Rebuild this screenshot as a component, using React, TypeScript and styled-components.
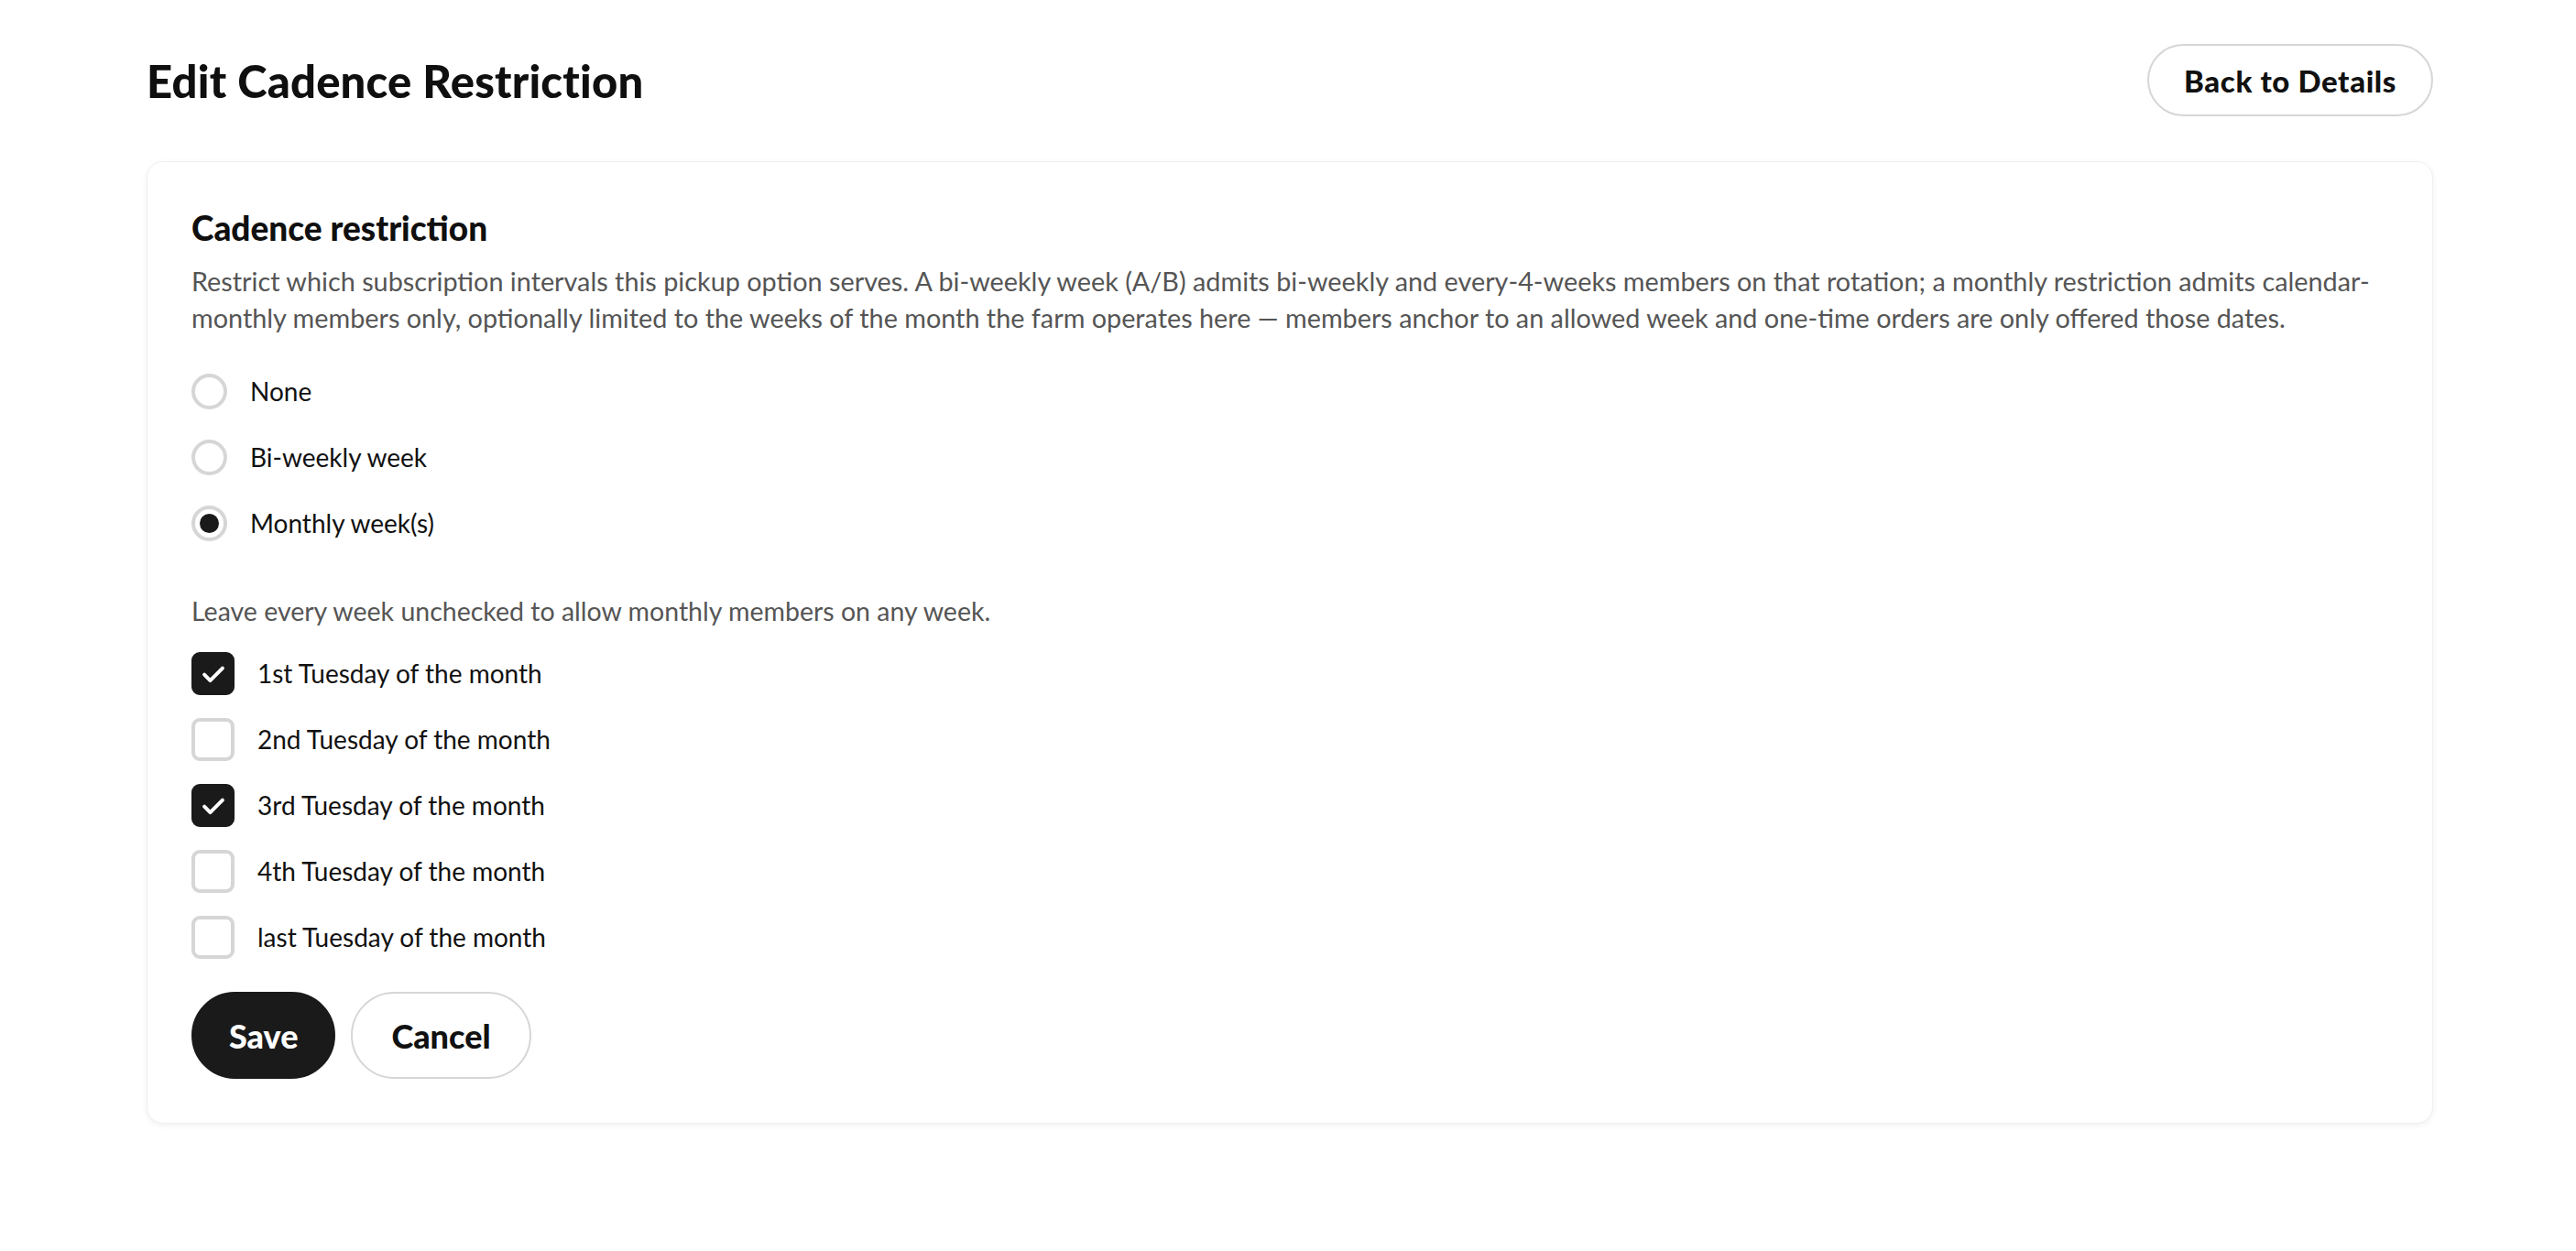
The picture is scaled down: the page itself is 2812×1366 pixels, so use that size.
import React, { useState } from 'react';
import styled, { createGlobalStyle } from 'styled-components';

const GlobalStyle = createGlobalStyle`
  html, body {
    margin: 0;
    padding: 0;
    background: #ffffff;
    font-family: 'Lato', 'Noto Sans', sans-serif;
    color: #111111;
  }
`;

const Page = styled.div`
  padding: 48px 156px 80px 160px;
`;

const Header = styled.header`
  display: flex;
  justify-content: space-between;
  align-items: center;
  margin-bottom: 49px;
`;

const Title = styled.h1`
  margin: 0;
  font-size: 49px;
  font-weight: 900;
  letter-spacing: 0.2px;
  color: #0f0f0f;
`;

const PillButton = styled.button<{ $primary?: boolean }>`
  display: inline-flex;
  align-items: center;
  justify-content: center;
  border-radius: 999px;
  border: 2px solid ${(p) => (p.$primary ? '#1a1a1a' : '#d6d6d6')};
  background: ${(p) => (p.$primary ? '#1a1a1a' : '#ffffff')};
  color: ${(p) => (p.$primary ? '#ffffff' : '#111111')};
  font-family: 'Lato', sans-serif;
  font-weight: 900;
  cursor: pointer;
`;

const BackButton = styled(PillButton)`
  height: 79px;
  padding: 0 38px;
  font-size: 33px;
  letter-spacing: 0.6px;
`;

const ActionButton = styled(PillButton)`
  height: 95px;
  font-size: 36px;
  padding: 0 ${(p) => (p.$primary ? '39px' : '42px')};
`;

const Card = styled.section`
  background: #ffffff;
  border: 1px solid #f0f0f0;
  border-radius: 18px;
  box-shadow: 0 2px 6px rgba(0, 0, 0, 0.06);
  padding: 51px 48px 48px;
`;

const SectionTitle = styled.h2`
  margin: 0 0 18px;
  font-size: 37px;
  font-weight: 900;
  line-height: 42px;
  color: #0f0f0f;
`;

const Description = styled.p`
  margin: 0;
  font-size: 28.8px;
  line-height: 39.5px;
  color: #555555;
  max-width: 2390px;
`;

const RadioGroup = styled.div`
  display: flex;
  flex-direction: column;
  gap: 33px;
  margin-top: 41px;
`;

const OptionRow = styled.label`
  display: flex;
  align-items: center;
  gap: 25px;
  font-size: 28px;
  line-height: 39px;
  color: #111111;
  cursor: pointer;
`;

const RadioCircle = styled.span<{ $checked: boolean }>`
  box-sizing: border-box;
  width: 39px;
  height: 39px;
  border-radius: 50%;
  border: 4px solid #d6d6d6;
  display: flex;
  align-items: center;
  justify-content: center;

  &::after {
    content: '';
    width: 21px;
    height: 21px;
    border-radius: 50%;
    background: #1a1a1a;
    display: ${(p) => (p.$checked ? 'block' : 'none')};
  }
`;

const Hint = styled.p`
  margin: 57px 0 25px;
  font-size: 28.5px;
  line-height: 39px;
  color: #555555;
`;

const CheckGroup = styled.div`
  display: flex;
  flex-direction: column;
  gap: 25px;
`;

const CheckBox = styled.span<{ $checked: boolean }>`
  box-sizing: border-box;
  width: 47px;
  height: 47px;
  border-radius: 9px;
  border: 4px solid ${(p) => (p.$checked ? '#1a1a1a' : '#d6d6d6')};
  background: ${(p) => (p.$checked ? '#1a1a1a' : '#ffffff')};
  display: flex;
  align-items: center;
  justify-content: center;
`;

const Actions = styled.div`
  display: flex;
  gap: 17px;
  margin-top: 36px;
`;

const Check = () => (
  <svg width="34" height="34" viewBox="0 0 24 24" fill="none" stroke="#ffffff" strokeWidth="2.8" strokeLinecap="round" strokeLinejoin="round">
    <path d="M5 12.5l4.5 4.5L19 7.5" />
  </svg>
);

const cadences = ['None', 'Bi-weekly week', 'Monthly week(s)'];
const weeks = ['1st', '2nd', '3rd', '4th', 'last'];

export default function App() {
  const [cadence, setCadence] = useState('Monthly week(s)');
  const [checked, setChecked] = useState<string[]>(['1st', '3rd']);

  const toggle = (w: string) =>
    setChecked((c) => (c.includes(w) ? c.filter((x) => x !== w) : [...c, w]));

  return (
    <Page>
      <GlobalStyle />
      <Header>
        <Title>Edit Cadence Restriction</Title>
        <BackButton>Back to Details</BackButton>
      </Header>

      <Card>
        <SectionTitle>Cadence restriction</SectionTitle>
        <Description>
          Restrict which subscription intervals this pickup option serves. A bi-weekly week (A/B) admits bi-weekly
          and every-4-weeks members on that rotation; a monthly restriction admits calendar-monthly members only,
          optionally limited to the weeks of the month the farm operates here — members anchor to an allowed week
          and one-time orders are only offered those dates.
        </Description>

        <RadioGroup>
          {cadences.map((c) => (
            <OptionRow key={c} onClick={() => setCadence(c)}>
              <RadioCircle $checked={cadence === c} />
              {c}
            </OptionRow>
          ))}
        </RadioGroup>

        <Hint>Leave every week unchecked to allow monthly members on any week.</Hint>

        <CheckGroup>
          {weeks.map((w) => (
            <OptionRow key={w} onClick={() => toggle(w)}>
              <CheckBox $checked={checked.includes(w)}>{checked.includes(w) && <Check />}</CheckBox>
              {w} Tuesday of the month
            </OptionRow>
          ))}
        </CheckGroup>

        <Actions>
          <ActionButton $primary>Save</ActionButton>
          <ActionButton>Cancel</ActionButton>
        </Actions>
      </Card>
    </Page>
  );
}
